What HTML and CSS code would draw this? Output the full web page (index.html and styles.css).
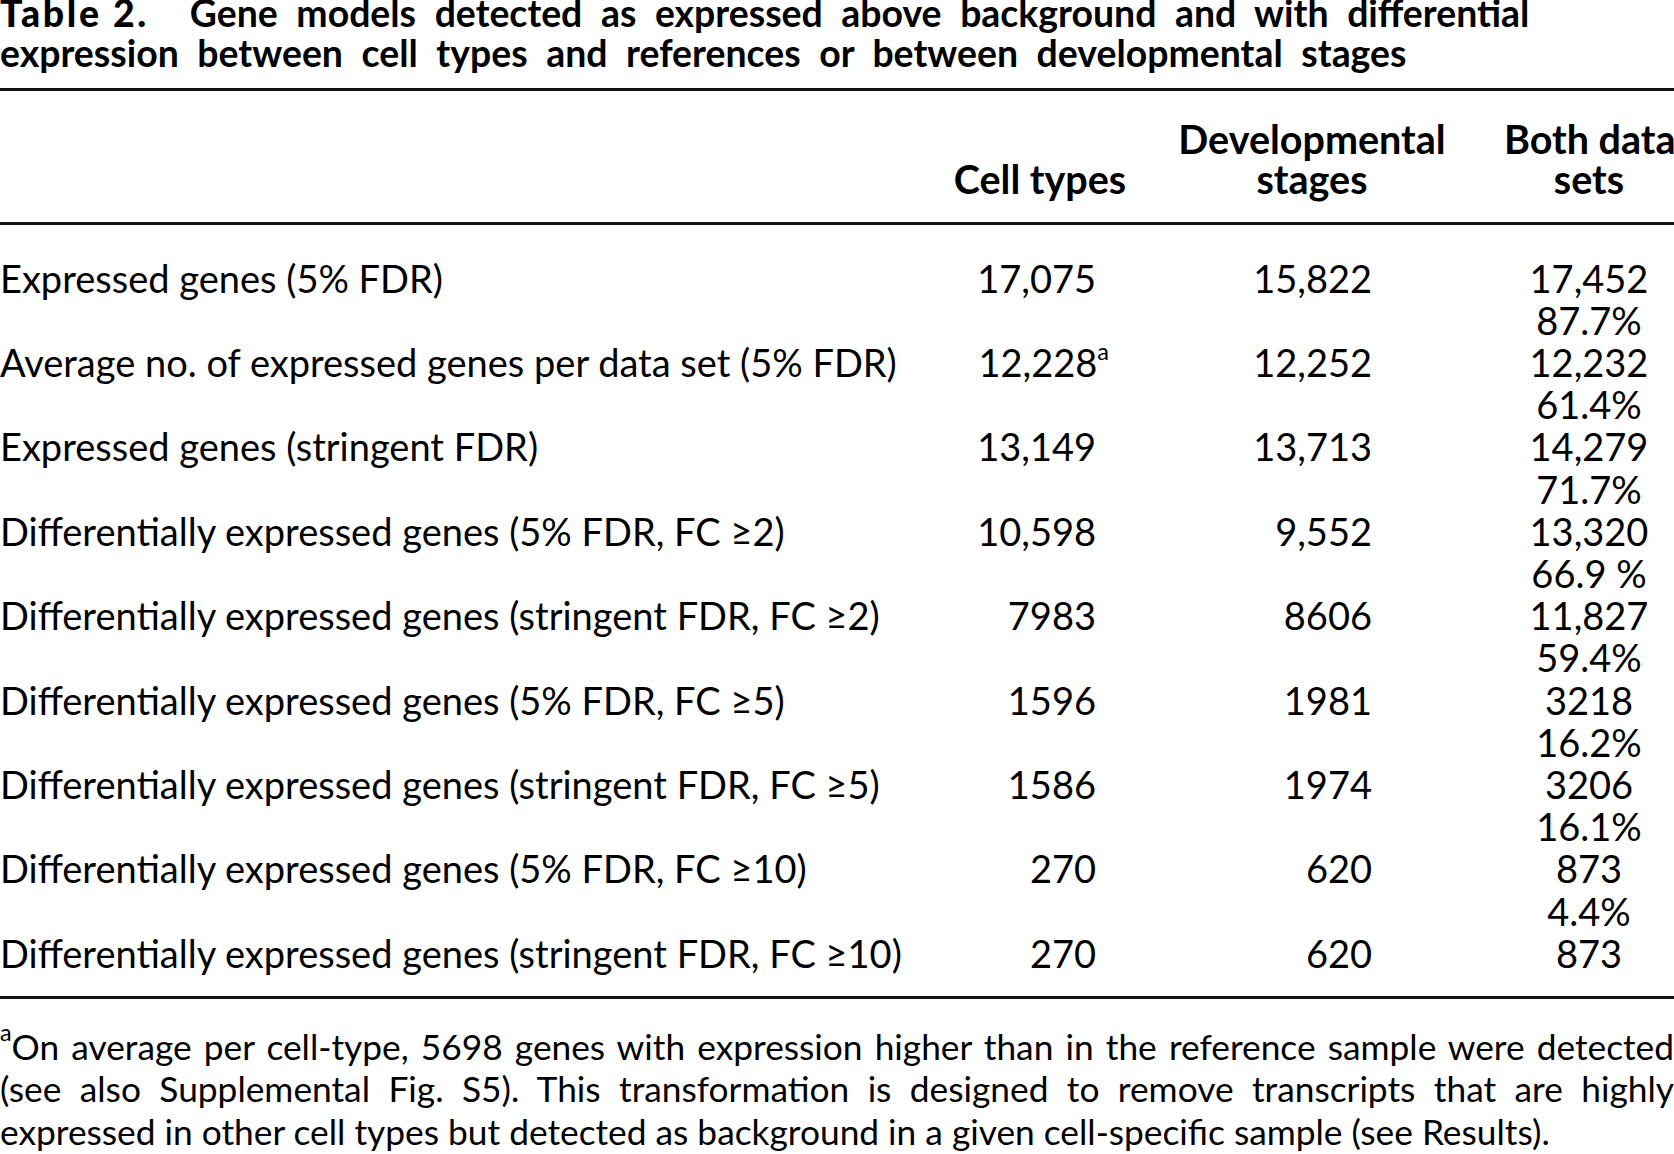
FILE: index.html
```html
<!DOCTYPE html>
<html lang="en">
<head>
<meta charset="utf-8">
<title>Table 2</title>
<link rel="stylesheet" href="styles.css">
</head>
<body>
<div class="page">
  <h1 class="caption"><span class="caption-label">Table 2.</span><span class="caption-text">Gene models detected as expressed above background and with differential<br>expression between cell types and references or between developmental stages</span></h1>
  <table class="data">
    <colgroup>
      <col class="c-label">
      <col class="c-cell">
      <col class="c-dev">
      <col class="c-both">
    </colgroup>
    <thead>
      <tr>
        <th></th>
        <th class="h-cell">Cell types</th>
        <th class="h-dev">Developmental<br>stages</th>
        <th class="h-both">Both data<br>sets</th>
      </tr>
    </thead>
    <tbody>
      <tr><td class="label">Expressed genes (5% FDR)</td><td class="n-cell">17,075</td><td class="n-dev">15,822</td><td class="n-both">17,452<br>87.7%</td></tr>
      <tr><td class="label">Average no. of expressed genes per data set (5% FDR)</td><td class="n-cell">12,228<sup>a</sup></td><td class="n-dev">12,252</td><td class="n-both">12,232<br>61.4%</td></tr>
      <tr><td class="label">Expressed genes (stringent FDR)</td><td class="n-cell">13,149</td><td class="n-dev">13,713</td><td class="n-both">14,279<br>71.7%</td></tr>
      <tr><td class="label">Differentially expressed genes (5% FDR, FC ≥2)</td><td class="n-cell">10,598</td><td class="n-dev">9,552</td><td class="n-both">13,320<br>66.9 %</td></tr>
      <tr><td class="label">Differentially expressed genes (stringent FDR, FC ≥2)</td><td class="n-cell">7983</td><td class="n-dev">8606</td><td class="n-both">11,827<br>59.4%</td></tr>
      <tr><td class="label">Differentially expressed genes (5% FDR, FC ≥5)</td><td class="n-cell">1596</td><td class="n-dev">1981</td><td class="n-both">3218<br>16.2%</td></tr>
      <tr><td class="label">Differentially expressed genes (stringent FDR, FC ≥5)</td><td class="n-cell">1586</td><td class="n-dev">1974</td><td class="n-both">3206<br>16.1%</td></tr>
      <tr><td class="label">Differentially expressed genes (5% FDR, FC ≥10)</td><td class="n-cell">270</td><td class="n-dev">620</td><td class="n-both">873<br>4.4%</td></tr>
      <tr><td class="label">Differentially expressed genes (stringent FDR, FC ≥10)</td><td class="n-cell">270</td><td class="n-dev">620</td><td class="n-both">873</td></tr>
    </tbody>
  </table>
  <p class="footnote">
    <span class="fn-line"><sup>a</sup>On average per cell-type, 5698 genes with expression higher than in the reference sample were detected</span>
    <span class="fn-line">(see also Supplemental Fig. S5). This transformation is designed to remove transcripts that are highly</span>
    <span class="fn-line last">expressed in other cell types but detected as background in a given cell-specific sample (see Results).</span>
  </p>
</div>
</body>
</html>
```

FILE: styles.css
```css
html {
  overflow: hidden;
  background: #fff;
}
body {
  margin: 0;
  font-family: Lato, "Open Sans", sans-serif;
  color: #000;
}
.page {
  width: 1674px;
}
.caption {
  margin: -7px 0 0;
  font-size: 37.4px;
  line-height: 40px;
  font-weight: 700;
  white-space: nowrap;
}
.caption-label {
  font-weight: 900;
  letter-spacing: 2.6px;
  margin-right: 41px;
}
.caption-text {
  word-spacing: 9.5px;
}
.data {
  width: 1674px;
  table-layout: fixed;
  border-collapse: collapse;
  margin-top: 14.5px;
  border-top: 3px solid #111;
  border-bottom: 3px solid #111;
  font-size: 38px;
}
.c-label { width: 950px; }
.c-cell { width: 180px; }
.c-dev { width: 364px; }
.c-both { width: 180px; }
thead th {
  font-size: 39.5px;
  font-weight: 700;
  line-height: 40px;
  text-align: center;
  vertical-align: bottom;
  white-space: nowrap;
  padding: 28px 0 23px;
  border-bottom: 3px solid #111;
}
.h-both {
  padding-left: 10px;
}
tbody td {
  line-height: 42.2px;
  vertical-align: top;
  padding: 0;
  white-space: nowrap;
}
tbody tr:first-child td {
  padding-top: 32px;
}
tbody tr:last-child td {
  padding-bottom: 22px;
}
.label {
  text-align: left;
}
.n-cell {
  text-align: right;
  padding-right: 34px;
}
.n-dev {
  text-align: right;
  padding-right: 122px;
}
.n-both {
  text-align: center;
  padding-left: 10px;
}
sup {
  font-size: 0.62em;
  line-height: 0;
  vertical-align: 17px;
}
.n-cell sup {
  margin-right: -13px;
}
.footnote {
  margin: 27px 0 0;
  font-size: 35.3px;
  line-height: 42.5px;
}
.footnote sup {
  font-size: 0.66em;
  vertical-align: 19px;
}
.fn-line {
  display: block;
  text-align: justify;
  text-align-last: justify;
  white-space: nowrap;
}
.fn-line.last {
  text-align-last: left;
}
```
